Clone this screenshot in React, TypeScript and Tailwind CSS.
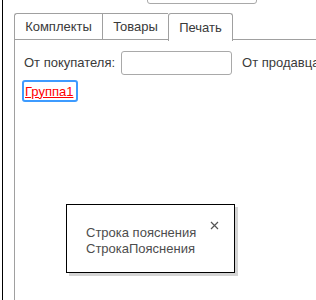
export default function App() {
  return (
    <div
      className="relative w-[316px] h-[300px] overflow-hidden bg-white text-[13px] text-[#3a3a3a]"
      style={{ fontFamily: '"Liberation Sans", Arial, sans-serif' }}
    >
      <div className="ml-[2px] h-full border-l border-black flex flex-col">
        <div className="h-[13px] relative">
          <div className="absolute left-[144px] top-[-20px] w-[110px] h-[24px] border border-[#a9a9a9] rounded-[3px] bg-white" />
        </div>
        <div className="ml-[11px] flex flex-col flex-1">
          <div className="flex h-[27px]">
            <div className="w-[88px] h-[27px] border border-[#a0a0a0] border-r-0 rounded-tl-[3px] flex items-center justify-center">
              Комплекты
            </div>
            <div className="w-[66px] h-[27px] border border-[#a0a0a0] border-r-0 flex items-center justify-center">
              Товары
            </div>
            <div className="w-[65px] h-[28px] border border-[#a0a0a0] border-b-0 rounded-t-[3px] flex items-center justify-center bg-white relative z-10">
              Печать
            </div>
            <div className="flex-1 border-b border-[#a0a0a0]" />
          </div>
          <div className="flex-1 border-l border-[#a0a0a0] pt-[11px] pl-[9px]">
            <div className="flex items-center h-[24px]">
              <span className="whitespace-nowrap">От покупателя:</span>
              <div className="ml-[6px] w-[111px] h-[24px] border border-[#a9a9a9] rounded-[3px] shrink-0" />
              <span className="ml-[10px] whitespace-nowrap">От продавца</span>
            </div>
            <div className="mt-[5px] ml-[-2px] w-[56px] h-[22px] border-2 border-[#3d9bff] rounded-[3px] flex items-center pl-[1px]">
              <span className="text-[#ff0000] underline leading-none">Группа1</span>
            </div>
          </div>
        </div>
      </div>
      <div className="absolute left-[66px] top-[204px] w-[169px] h-[69px] bg-white border border-black shadow-[3px_3px_0_0_#d4d4d4] pl-[19px] pt-[20px] leading-[16px] text-[#4d4d4d]">
        <div>Строка пояснения</div>
        <div>СтрокаПояснения</div>
        <svg
          className="absolute left-[143px] top-[16px]"
          width="9"
          height="9"
          viewBox="0 0 9 9"
        >
          <path d="M1 1L8 8M8 1L1 8" stroke="#555" strokeWidth="1.2" />
        </svg>
      </div>
    </div>
  );
}
